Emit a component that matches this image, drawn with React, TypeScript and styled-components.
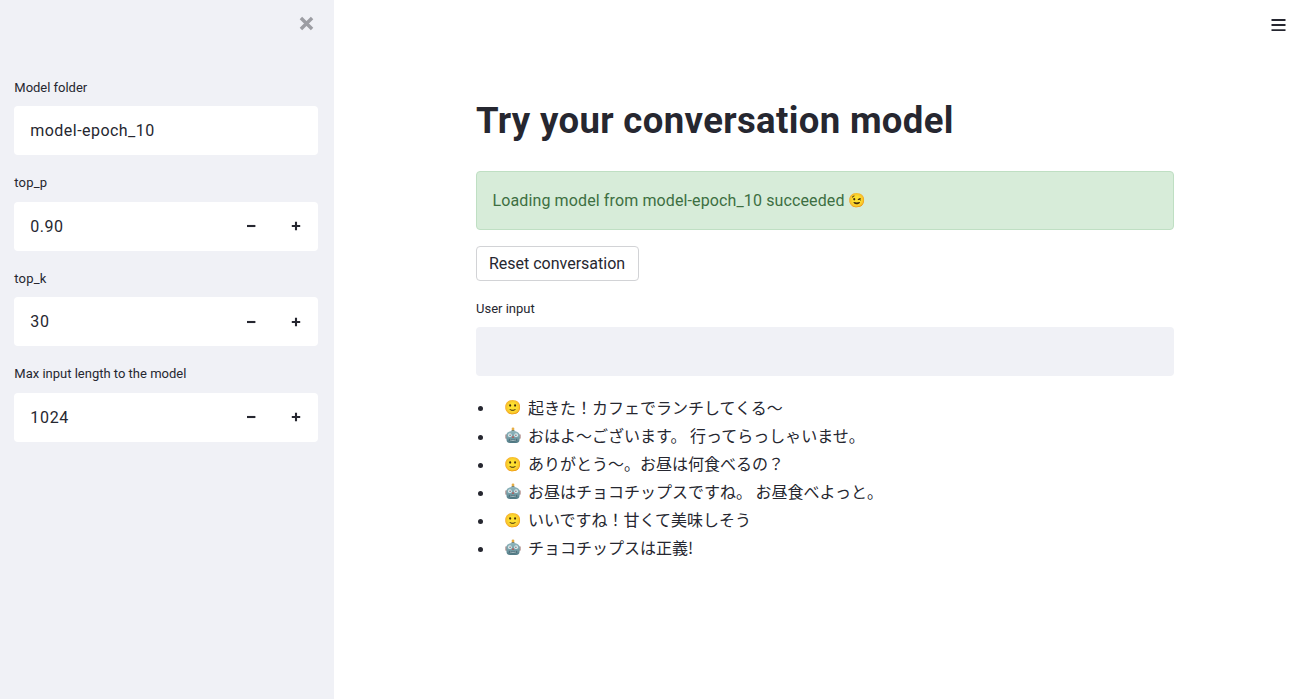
import React from "react";
import styled, { createGlobalStyle } from "styled-components";

const ink = "#262730";
const panel = "#f0f1f6";

const GlobalStyle = createGlobalStyle`
  * { box-sizing: border-box; }
  body {
    margin: 0;
    background: #fff;
    color: ${ink};
    font-family: Roboto, "Noto Sans CJK JP", sans-serif;
    font-size: 16px;
  }
`;

const Page = styled.div`
  display: flex;
  height: 699px;
  overflow: hidden;
`;

const Sidebar = styled.aside`
  display: flex;
  flex-direction: column;
  width: 334px;
  padding: 0 15.8px 0 14.3px;
  background: ${panel};
`;

const SidebarHeader = styled.div`
  display: flex;
  justify-content: flex-end;
  height: 79px;
  padding: 16px 4.6px 0 0;
`;

const IconButton = styled.button`
  display: flex;
  align-items: center;
  justify-content: center;
  width: 15px;
  height: 15px;
  padding: 0;
  border: 0;
  background: none;
`;

const Field = styled.div`
  margin-bottom: 19.3px;
`;

const Label = styled.label<{ $track?: number }>`
  display: block;
  height: 27.4px;
  font-size: 13px;
  line-height: 17px;
  letter-spacing: ${(p) => p.$track ?? 0}px;
`;

const Control = styled.div<{ $fill: string }>`
  display: flex;
  align-items: center;
  height: 48.8px;
  padding-left: 16px;
  border-radius: 4px;
  background: ${(p) => p.$fill};
`;

const Value = styled.span<{ $track: number }>`
  flex: 1;
  letter-spacing: ${(p) => p.$track}px;
`;

const StepButton = styled.button`
  display: flex;
  align-items: center;
  justify-content: center;
  width: 45px;
  height: 100%;
  padding: 0;
  border: 0;
  background: none;
`;

const Main = styled.main`
  position: relative;
  flex: 1;
  padding: 97px 141px 0 142px;
`;

const MenuButton = styled(IconButton)`
  position: absolute;
  top: 18px;
  right: 29px;
  width: 15px;
  height: 14px;
`;

const Title = styled.h1`
  margin: 0 0 26px;
  font-size: 36.5px;
  font-weight: 700;
  line-height: 48px;
  letter-spacing: 0.36px;
`;

const Alert = styled.div`
  display: flex;
  align-items: center;
  height: 59px;
  margin-bottom: 16px;
  padding-left: 15.5px;
  border: 1px solid #bfdfc3;
  border-radius: 4px;
  background: #d7ecd9;
  color: #3d6f42;
  letter-spacing: 0.12px;
`;

const Emoji = styled.span`
  display: inline-flex;
  flex: none;
  align-items: center;
  justify-content: center;
  width: 16px;
  height: 18px;
  font-family: "Noto Color Emoji", sans-serif;
  font-size: 14px;
  line-height: 18px;
  letter-spacing: 0;
`;

const AlertEmoji = styled(Emoji)`
  margin: -1px 0 0 4.5px;
`;

const ResetButton = styled.button`
  display: block;
  width: 163px;
  height: 35px;
  margin-bottom: 19.1px;
  padding: 0 1px 0 0;
  border: 1px solid #d2d3d6;
  border-radius: 4px;
  background: #fff;
  color: ${ink};
  font: inherit;
`;

const Messages = styled.ul`
  margin: 17.1px 0 0;
  padding: 0;
  list-style: none;
`;

const Message = styled.li`
  display: flex;
  align-items: center;
  height: 28.1px;
  white-space: pre;
  &::before {
    content: "";
    width: 5px;
    height: 5px;
    margin: 3px 21.7px 0 2.3px;
    border-radius: 50%;
    background: ${ink};
  }
`;

const MessageText = styled.span`
  margin: -1px 0 0 7px;
  font-size: 16px;
  font-family: "Noto Sans CJK JP", sans-serif;
  line-height: 28px;
`;

const Minus = () => (
  <svg width="10" height="10" viewBox="0 0 10 10">
    <path d="M1 5h8.4" stroke={ink} strokeWidth="2.1" />
  </svg>
);

const Plus = () => (
  <svg width="10" height="10" viewBox="0 0 10 10">
    <path d="M.8 5h8.4M5 .8v8.4" stroke={ink} strokeWidth="2.1" />
  </svg>
);

const Close = () => (
  <svg width="15" height="15" viewBox="0 0 14 14">
    <path d="M1.8 1.8l10.4 10.4M12.2 1.8L1.8 12.2" stroke="#9c9da3" strokeWidth="3.2" />
  </svg>
);

const Menu = () => (
  <svg width="15" height="14" viewBox="0 0 15 14">
    <path d="M.5 2h14M.5 7h14M.5 12.2h14" stroke={ink} strokeWidth="1.8" />
  </svg>
);

const Robot = () => (
  <svg width="16" height="17" viewBox="0 0 16 17" role="img" aria-label="🤖">
    <defs>
      <linearGradient id="robotHead" x1="0" y1="0" x2="0" y2="1">
        <stop offset="0" stopColor="#8fb4bc" />
        <stop offset="0.5" stopColor="#7aa3ac" />
        <stop offset="1" stopColor="#4f7883" />
      </linearGradient>
    </defs>
    <path d="M6 4.6h4L9 2.8H7z" fill="#57777f" />
    <circle cx="8" cy="2" r="1.4" fill="#e6ad45" />
    <rect x=".3" y="7.3" width="1.7" height="4.6" rx=".8" fill="#b08d8b" />
    <rect x="14" y="7.3" width="1.7" height="4.6" rx=".8" fill="#b08d8b" />
    <path d="M1.2 8.8C1.2 5.5 4 3.9 8 3.9s6.8 1.6 6.8 4.9l-.3 4.2c-.1 2-1.5 3-3.4 3H4.900c-1.900 0-3.300-1-3.400-3z" fill="url(#robotHead)" />
    <circle cx="4.9" cy="8.2" r="1.9" fill="#d6eaed" />
    <circle cx="11.1" cy="8.2" r="1.9" fill="#d6eaed" />
    <circle cx="5.1" cy="8.3" r=".8" fill="#8f6b70" />
    <circle cx="10.9" cy="8.3" r=".8" fill="#8f6b70" />
    <path d="M8 8.7l1.300 2.100H6.700z" fill="#b9504c" />
    <path d="M4 11.800c2.400.9 5.600.9 8 0v1.600c-2.400 1.300-5.600 1.300-8 0z" fill="#44636e" />
    <path d="M4.800 12.900c2 .7 4.400.7 6.400 0" fill="none" stroke="#c2d8dc" strokeWidth=".8" />
  </svg>
);

const settings = [
  { label: "Model folder", value: "model-epoch_10", track: 0.46, labelTrack: -0.02 },
  { label: "top_p", value: "0.90", track: 0.5, labelTrack: 0.2, stepper: true },
  { label: "top_k", value: "30", track: 0.6, labelTrack: 0.2, stepper: true },
  { label: "Max input length to the model", value: "1024", track: 0.7, stepper: true },
];

const messages = [
  { user: true, text: "起きた！カフェでランチしてくる〜" },
  { user: false, text: "おはよ〜ございます。 行ってらっしゃいませ。" },
  { user: true, text: "ありがとう〜。お昼は何食べるの？" },
  { user: false, text: "お昼はチョコチップスですね。 お昼食べよっと。" },
  { user: true, text: "いいですね！甘くて美味しそう" },
  { user: false, text: "チョコチップスは正義!" },
];

export default function App() {
  return (
    <Page>
      <GlobalStyle />
      <Sidebar>
        <SidebarHeader>
          <IconButton aria-label="Close">
            <Close />
          </IconButton>
        </SidebarHeader>
        {settings.map((s) => (
          <Field key={s.label}>
            <Label $track={s.labelTrack}>{s.label}</Label>
            <Control $fill="#fff">
              <Value $track={s.track}>{s.value}</Value>
              {s.stepper && (
                <>
                  <StepButton aria-label="Decrease">
                    <Minus />
                  </StepButton>
                  <StepButton aria-label="Increase">
                    <Plus />
                  </StepButton>
                </>
              )}
            </Control>
          </Field>
        ))}
      </Sidebar>
      <Main>
        <MenuButton aria-label="Menu">
          <Menu />
        </MenuButton>
        <Title>Try your conversation model</Title>
        <Alert>
          Loading model from model-epoch_10 succeeded
          <AlertEmoji>😉</AlertEmoji>
        </Alert>
        <ResetButton>Reset conversation</ResetButton>
        <Label>User input</Label>
        <Control $fill={panel} />
        <Messages>
          {messages.map((m) => (
            <Message key={m.text}>
              <Emoji>{m.user ? "🙂" : <Robot />}</Emoji>
              <MessageText>{m.text}</MessageText>
            </Message>
          ))}
        </Messages>
      </Main>
    </Page>
  );
}
